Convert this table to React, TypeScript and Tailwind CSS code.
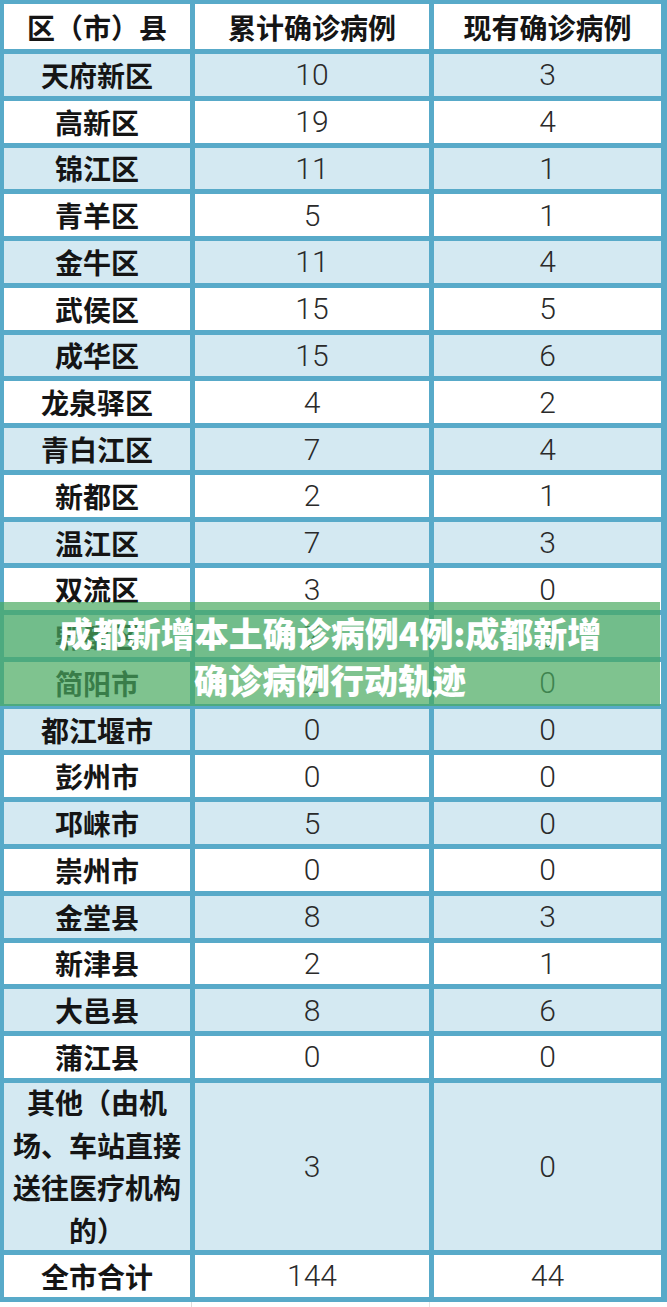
import React from 'react';

type Row = { name: string; total: number; current: number };

const ROWS: Row[] = [
  { name: '天府新区', total: 10, current: 3 },
  { name: '高新区', total: 19, current: 4 },
  { name: '锦江区', total: 11, current: 1 },
  { name: '青羊区', total: 5, current: 1 },
  { name: '金牛区', total: 11, current: 4 },
  { name: '武侯区', total: 15, current: 5 },
  { name: '成华区', total: 15, current: 6 },
  { name: '龙泉驿区', total: 4, current: 2 },
  { name: '青白江区', total: 7, current: 4 },
  { name: '新都区', total: 2, current: 1 },
  { name: '温江区', total: 7, current: 3 },
  { name: '双流区', total: 3, current: 0 },
  { name: '郫都区', total: 7, current: 0 },
  { name: '简阳市', total: 2, current: 0 },
  { name: '都江堰市', total: 0, current: 0 },
  { name: '彭州市', total: 0, current: 0 },
  { name: '邛崃市', total: 5, current: 0 },
  { name: '崇州市', total: 0, current: 0 },
  { name: '金堂县', total: 8, current: 3 },
  { name: '新津县', total: 2, current: 1 },
  { name: '大邑县', total: 8, current: 6 },
  { name: '蒲江县', total: 0, current: 0 },
];

const nameCls =
  "flex items-center justify-center text-center font-['Noto_Sans_CJK_SC',sans-serif] font-bold text-[28px] text-[#151515]";
const numCls =
  "flex items-center justify-center font-['Roboto','Liberation_Sans',sans-serif] font-light text-[30px] text-[#2a2a2a]";

export default function App() {
  return (
    <div className="w-[667px] h-[1307px] bg-white overflow-hidden">
      <div className="relative">
        {/* table */}
        <div className="grid grid-cols-[186px_234px_227px] gap-[5px] bg-[#58aac9] pt-[4px] pl-[4px] pr-[6px] pb-[5px]">
          {/* header */}
          <div className={`${nameCls} h-[45px] bg-white`}>区（市）县</div>
          <div className={`${nameCls} h-[45px] bg-white`}>累计确诊病例</div>
          <div className={`${nameCls} h-[45px] bg-white`}>现有确诊病例</div>

          {ROWS.map((r, i) => {
            const bg = i % 2 === 0 ? 'bg-[#d4e9f2]' : 'bg-white';
            return (
              <React.Fragment key={r.name}>
                <div className={`${nameCls} h-[41.77px] ${bg}`}>{r.name}</div>
                <div className={`${numCls} h-[41.77px] ${bg}`}>{r.total}</div>
                <div className={`${numCls} h-[41.77px] ${bg}`}>{r.current}</div>
              </React.Fragment>
            );
          })}

          {/* others */}
          <div className={`${nameCls} h-[167px] bg-[#d4e9f2] leading-[42.5px] px-[6px]`}>
            其他（由机场、车站直接送往医疗机构的）
          </div>
          <div className={`${numCls} h-[167px] bg-[#d4e9f2]`}>3</div>
          <div className={`${numCls} h-[167px] bg-[#d4e9f2]`}>0</div>

          {/* total */}
          <div className={`${nameCls} h-[42px] bg-white`}>全市合计</div>
          <div className={`${numCls} h-[42px] bg-white`}>144</div>
          <div className={`${numCls} h-[42px] bg-white`}>44</div>
        </div>

        {/* next table edge */}
        <div className="h-[5px] flex">
          <div className="w-[192px] border-r border-[#dcdcdc]" />
          <div className="w-[238px] border-r border-[#e4e4e4]" />
        </div>

        {/* title banner */}
        <div className="absolute top-[602px] left-0 right-[7px] h-[104px] bg-[rgba(72,170,95,0.7)] pt-[7px] text-center font-['Noto_Sans_CJK_SC',sans-serif] font-black text-[34px] leading-[47px] text-white">
          成都新增本土确诊病例4例:成都新增
          <br />
          确诊病例行动轨迹
        </div>
      </div>
    </div>
  );
}
